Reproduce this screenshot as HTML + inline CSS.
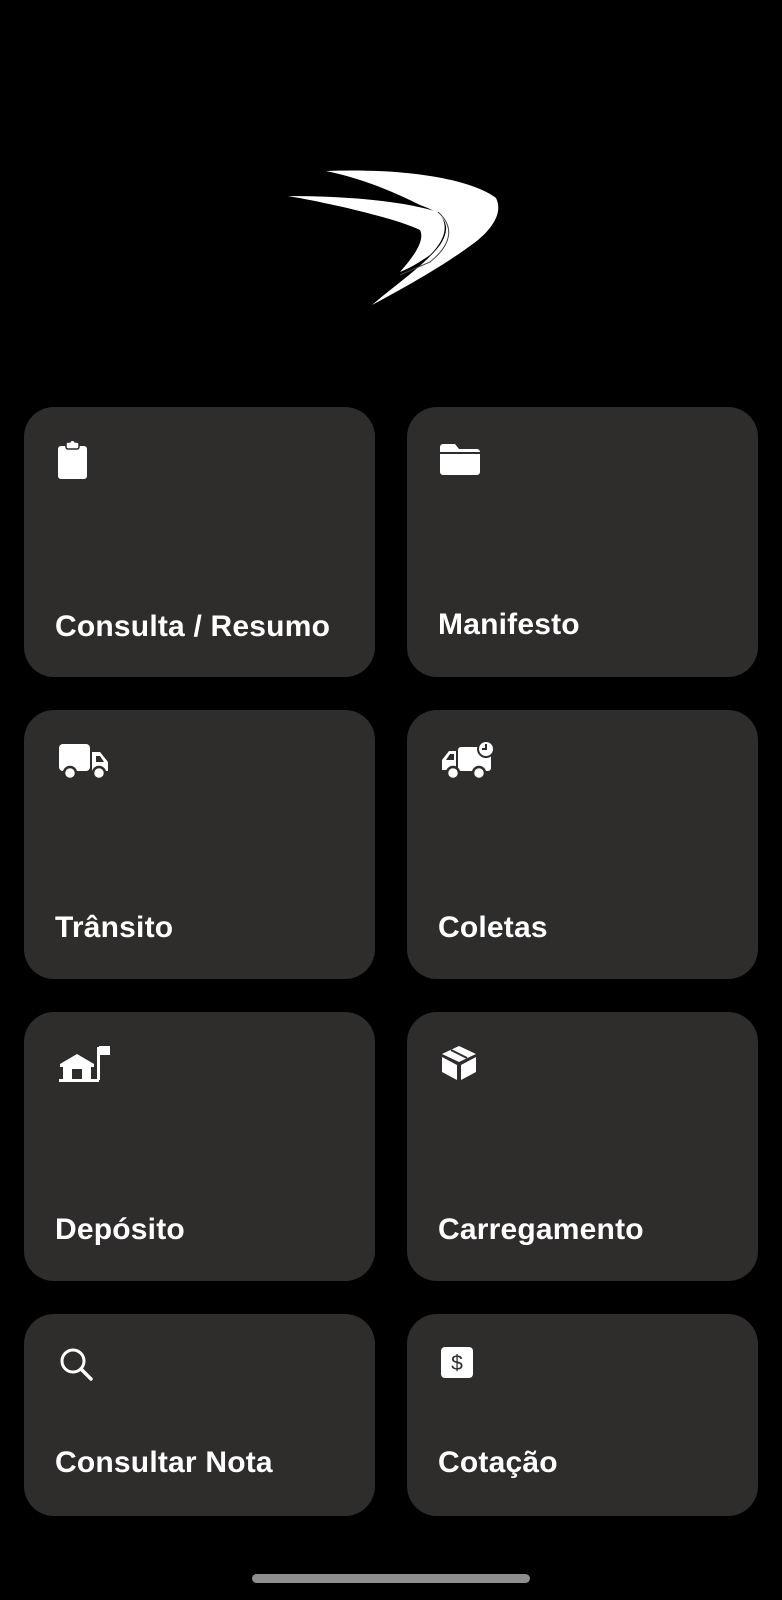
<!DOCTYPE html>
<html><head><meta charset="utf-8"><style>
html,body{margin:0;padding:0;background:#000;width:782px;height:1600px;overflow:hidden;font-family:"Liberation Sans",sans-serif}
.card{position:absolute;width:351px;background:#2f2c2c;border-radius:30px}
.l{position:absolute;left:31px;color:#fff;font-size:30px;font-weight:bold;letter-spacing:0.2px;white-space:nowrap}
.ic{position:absolute;left:33px;top:30px}
.bar{position:absolute;left:252px;top:1574px;width:278px;height:9px;border-radius:5px;background:#8e8e8e}
</style></head><body>
<svg style="position:absolute;left:0;top:0" width="782" height="400">
<path d="M326 171 C400 168 470 178 496 198 C504 214 490 232 470 246 C440 268 400 290 372 305 C395 285 425 265 440 245 C455 222 440 212 420 205 C390 190 360 178 326 171 Z" fill="#fff"/>
<path d="M288 196 C340 196 400 200 438 212 C450 225 445 240 430 255 C420 262 410 268 400 272 C415 255 425 240 420 230 C400 220 340 205 288 196 Z" fill="#fff"/>
<path d="M438 212 C456 228 450 246 430 262 L400 275" stroke="#444" stroke-width="1" fill="none"/>
</svg>

<div class="card" style="left:24px;top:407px;height:270px">
 <svg class="ic" style="left:33px;top:33px" width="31" height="40" viewBox="0 0 31 40"><rect x="1" y="6" width="29" height="33" rx="3" fill="#fff"/><rect x="9" y="2" width="13" height="7" rx="2" fill="#fff" stroke="#2f2c2c" stroke-width="1.5"/><circle cx="15.5" cy="3" r="2" fill="#fff"/></svg>
 <div class="l" style="top:203px">Consulta / Resumo</div>
</div>
<div class="card" style="left:407px;top:407px;height:270px">
 <svg class="ic" style="left:33px;top:36px" width="40" height="32" viewBox="0 0 40 32"><path d="M3 1h12l4 5h18a3 3 0 0 1 3 3v20a3 3 0 0 1-3 3H3a3 3 0 0 1-3-3V4a3 3 0 0 1 3-3z" fill="#fff"/><rect x="0" y="9" width="40" height="2" fill="#2f2c2c"/></svg>
 <div class="l" style="top:201px">Manifesto</div>
</div>

<div class="card" style="left:24px;top:710px;height:269px">
 <svg class="ic" style="left:35px;top:34px" width="50" height="36" viewBox="0 0 50 36"><rect x="0" y="0" width="31" height="27" rx="4" fill="#fff"/><path d="M33 8h8l8 10v9h-16z" fill="#fff"/><path d="M37 12h4l4 6h-8z" fill="#2f2c2c"/><circle cx="11" cy="29" r="6" fill="#fff" stroke="#2f2c2c" stroke-width="2.5"/><circle cx="40" cy="29" r="6" fill="#fff" stroke="#2f2c2c" stroke-width="2.5"/></svg>
 <div class="l" style="top:201px">Trânsito</div>
</div>
<div class="card" style="left:407px;top:710px;height:269px">
 <svg class="ic" style="left:34px;top:31px" width="56" height="40" viewBox="0 0 56 40"><path d="M15 10h-7l-7 9v10h14z" fill="#fff"/><path d="M5 19l4-6h4v6z" fill="#2f2c2c"/><rect x="17" y="6" width="33" height="24" rx="3" fill="#fff"/><circle cx="45" cy="8" r="8" fill="#fff" stroke="#2f2c2c" stroke-width="2"/><path d="M45 3v5h-4" stroke="#2f2c2c" stroke-width="2" fill="none"/><circle cx="12" cy="32" r="6" fill="#fff" stroke="#2f2c2c" stroke-width="2.5"/><circle cx="38" cy="32" r="6" fill="#fff" stroke="#2f2c2c" stroke-width="2.5"/></svg>
 <div class="l" style="top:201px">Coletas</div>
</div>

<div class="card" style="left:24px;top:1012px;height:269px">
 <svg class="ic" style="left:35px;top:33px" width="54" height="38" viewBox="0 0 54 38"><path d="M1 19L18 9l17 10v3H1z" fill="#fff"/><rect x="4" y="20" width="28" height="16" fill="#fff"/><rect x="13" y="24" width="10" height="12" fill="#2f2c2c"/><rect x="0" y="34" width="40" height="3" fill="#fff"/><rect x="38" y="2" width="3" height="33" fill="#fff"/><path d="M40 1h11v9h-11z" fill="#fff"/></svg>
 <div class="l" style="top:201px">Depósito</div>
</div>
<div class="card" style="left:407px;top:1012px;height:269px">
 <svg class="ic" style="left:34px;top:33px" width="36" height="36" viewBox="0 0 36 36"><path d="M18 1L35 9 18 17 1 9z" fill="#fff"/><path d="M1 12l15 8v15L1 27z" fill="#fff"/><path d="M35 12l-15 8v15l15-8z" fill="#fff"/><path d="M10 5l16 8" stroke="#2f2c2c" stroke-width="2"/></svg>
 <div class="l" style="top:201px">Carregamento</div>
</div>

<div class="card" style="left:24px;top:1314px;height:202px">
 <svg class="ic" style="left:35px;top:33px" width="36" height="36" viewBox="0 0 36 36"><circle cx="14" cy="14" r="11" stroke="#fff" stroke-width="3" fill="none"/><path d="M22 22l10 10" stroke="#fff" stroke-width="3.5" stroke-linecap="round"/></svg>
 <div class="l" style="top:132px">Consultar Nota</div>
</div>
<div class="card" style="left:407px;top:1314px;height:202px">
 <svg class="ic" style="left:34px;top:33px" width="33" height="32" viewBox="0 0 33 32"><rect x="0" y="0" width="32" height="31" rx="4" fill="#fff"/><text x="16" y="23" text-anchor="middle" font-family="Liberation Sans" font-size="21" fill="#2f2c2c">$</text></svg>
 <div class="l" style="top:132px">Cotação</div>
</div>

<div class="bar"></div>
</body></html>
